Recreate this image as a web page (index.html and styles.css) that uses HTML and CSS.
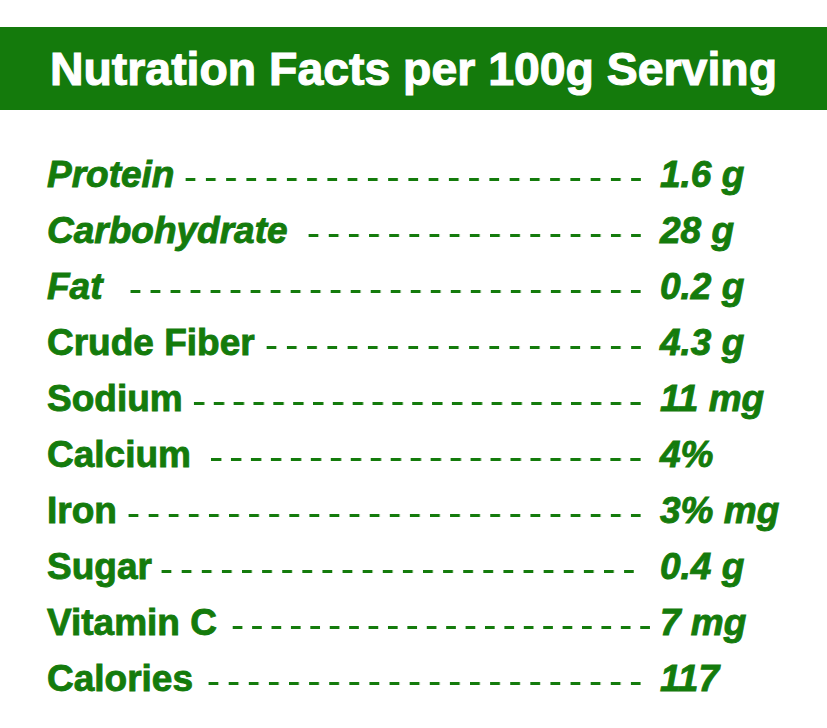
FILE: index.html
```html
<!DOCTYPE html>
<html lang="en">
<head>
<meta charset="utf-8">
<title>Nutration Facts</title>
<link rel="stylesheet" href="styles.css">
</head>
<body>
<header class="banner">
  <h1 class="banner-title">Nutration Facts per 100g Serving</h1>
</header>
<main class="facts">
  <div class="row"><span class="label italic">Protein</span><span class="dashes"></span><span class="value">1.6 g</span></div>
  <div class="row"><span class="label italic">Carbohydrate</span><span class="dashes wide"></span><span class="value">28 g</span></div>
  <div class="row"><span class="label italic">Fat</span><span class="dashes xwide"></span><span class="value">0.2 g</span></div>
  <div class="row"><span class="label">Crude Fiber</span><span class="dashes"></span><span class="value">4.3 g</span></div>
  <div class="row"><span class="label">Sodium</span><span class="dashes"></span><span class="value">11 mg</span></div>
  <div class="row"><span class="label">Calcium</span><span class="dashes wide"></span><span class="value">4%</span></div>
  <div class="row"><span class="label">Iron</span><span class="dashes"></span><span class="value">3% mg</span></div>
  <div class="row"><span class="label">Sugar</span><span class="dashes tight short"></span><span class="value">0.4 g</span></div>
  <div class="row"><span class="label">Vitamin C</span><span class="dashes mid long"></span><span class="value">7 mg</span></div>
  <div class="row"><span class="label">Calories</span><span class="dashes mid"></span><span class="value">117</span></div>
</main>
</body>
</html>
```
FILE: styles.css
```css
html, body {
  margin: 0;
  padding: 0;
  background: #ffffff;
}

body {
  font-family: "Liberation Sans", Arial, sans-serif;
  color: #147b0c;
}

.banner {
  margin-top: 27px;
  height: 83px;
  background: #147a0c;
  display: flex;
  align-items: center;
  justify-content: center;
}

.banner-title {
  margin: 0;
  color: #ffffff;
  font-size: 46.4px;
  font-weight: bold;
  line-height: 1;
  padding-top: 2px;
  -webkit-text-stroke: 1.1px #ffffff;
}

.facts {
  padding: 37px 0 0 47px;
  display: flex;
  flex-direction: column;
}

.row {
  display: flex;
  align-items: flex-start;
  height: 56px;
  line-height: 56px;
  font-size: 37px;
  font-weight: bold;
  -webkit-text-stroke: 0.9px #147b0c;
}

.label {
  white-space: nowrap;
}

.italic {
  font-style: italic;
}

.dashes {
  flex: 1;
  height: 56px;
  margin-left: 2px;
  margin-right: 19px;
  background-image: linear-gradient(to right, transparent 0, transparent 9.4px, #147b0c 9.4px, #147b0c 19.4px);
  background-size: 19.4px 3px;
  background-repeat: space no-repeat;
  background-position: left 31px;
}

.dashes.tight { margin-left: 0; }
.dashes.mid { margin-left: 6px; }
.dashes.wide { margin-left: 11px; }
.dashes.xwide { margin-left: 18px; }
.dashes.short { margin-right: 26px; }
.dashes.long { margin-right: 10px; }

.value {
  width: 167px;
  flex: none;
  font-style: italic;
  white-space: nowrap;
}
```
